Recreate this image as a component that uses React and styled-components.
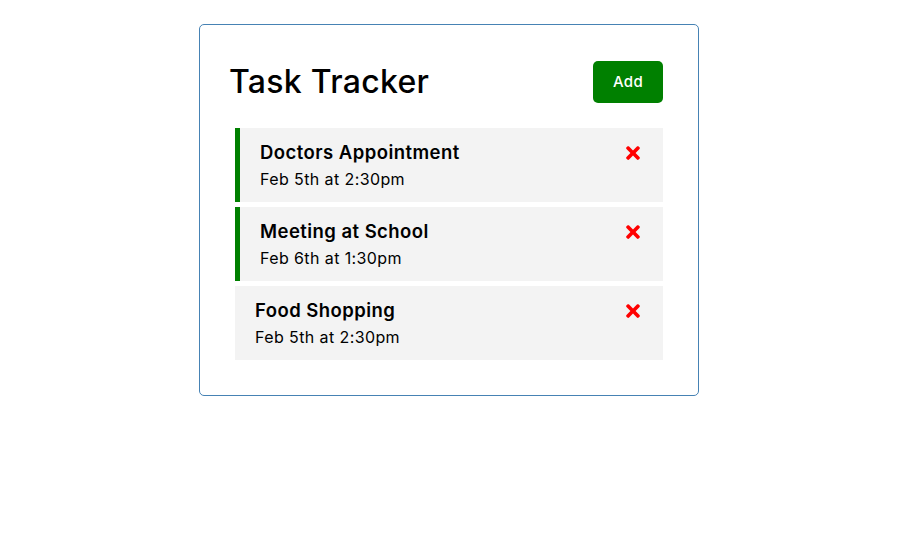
import React from 'react';
import styled, { createGlobalStyle } from 'styled-components';
import { FaTimes } from 'react-icons/fa';

const GlobalStyle = createGlobalStyle`
  * {
    box-sizing: border-box;
    margin: 0;
    padding: 0;
  }
  body {
    font-family: 'Inter', 'Noto Sans', sans-serif;
    background: #fff;
    color: #000;
  }
`;

const Page = styled.div`
  display: flex;
  justify-content: center;
  padding: 24px 2px 0 0;
`;

const Container = styled.div`
  width: 500px;
  border: 1px solid steelblue;
  border-radius: 5px;
  padding: 30px;
`;

const Header = styled.header`
  display: flex;
  justify-content: space-between;
  align-items: center;
  height: 53px;
  margin-bottom: 20px;
`;

const Title = styled.h1`
  font-size: 32px;
  font-weight: 500;
  letter-spacing: 0.3px;
  line-height: 48px;
  margin-left: -1px;
`;

const Button = styled.button`
  background: ${(p) => p.color || '#000'};
  color: #fff;
  border: none;
  padding: 10px 20px;
  margin: 5px;
  height: 42px;
  border-radius: 5px;
  font-size: 15px;
  font-family: inherit;
  font-weight: 500;
  letter-spacing: 0.3px;
  cursor: pointer;
`;

const TaskItem = styled.div`
  background: #f3f3f3;
  margin: 5px;
  padding: 10px 20px;
  border-left: ${(p) => (p.reminder ? '5px solid green' : 'none')};
  cursor: pointer;
`;

const TaskTitle = styled.h3`
  display: flex;
  align-items: center;
  justify-content: space-between;
  font-size: 18.5px;
  font-weight: 600;
  line-height: 29px;
  letter-spacing: 0.45px;
`;

const DeleteIcon = styled(FaTimes)`
  color: red;
  font-size: 20px;
  flex-shrink: 0;
`;

const TaskDay = styled.p`
  font-size: 16px;
  line-height: 25px;
  letter-spacing: 0.4px;
`;

const tasks = [
  { id: 1, text: 'Doctors Appointment', day: 'Feb 5th at 2:30pm', reminder: true },
  { id: 2, text: 'Meeting at School', day: 'Feb 6th at 1:30pm', reminder: true },
  { id: 3, text: 'Food Shopping', day: 'Feb 5th at 2:30pm', reminder: false },
];

const Task = ({ task }) => (
  <TaskItem reminder={task.reminder}>
    <TaskTitle>
      {task.text} <DeleteIcon />
    </TaskTitle>
    <TaskDay>{task.day}</TaskDay>
  </TaskItem>
);

export default function App() {
  return (
    <>
      <GlobalStyle />
      <Page>
        <Container>
          <Header>
            <Title>Task Tracker</Title>
            <Button color="green">Add</Button>
          </Header>
          {tasks.map((task) => (
            <Task key={task.id} task={task} />
          ))}
        </Container>
      </Page>
    </>
  );
}
